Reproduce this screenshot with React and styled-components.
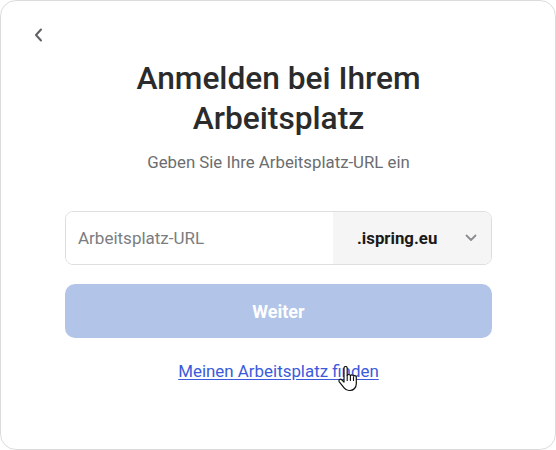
import React from 'react'
import styled, { createGlobalStyle } from 'styled-components'

const GlobalStyle = createGlobalStyle`
  html, body {
    margin: 0;
    padding: 0;
    background: #fff;
  }
  body {
    font-family: Roboto, "Noto Sans", Arial, sans-serif;
    -webkit-font-smoothing: antialiased;
  }
`

const Card = styled.div`
  box-sizing: border-box;
  width: 556px;
  height: 450px;
  border: 1px solid #dcdcdc;
  border-radius: 16px;
  background: #fff;
  padding: 22px 63px 0 64px;
  display: flex;
  flex-direction: column;
  position: relative;
`

const BackButton = styled.button`
  align-self: flex-start;
  width: 24px;
  height: 24px;
  margin-left: -38px;
  padding: 0;
  border: 0;
  background: none;
  color: #5f6166;
  display: flex;
  align-items: center;
  justify-content: center;
  cursor: pointer;
`

const Title = styled.h1`
  margin: 12px 0 0;
  font-size: 31.7px;
  line-height: 40px;
  font-weight: 500;
  color: #2b2b2b;
  text-align: center;
`

const Subtitle = styled.p`
  margin: 12px 0 0;
  font-size: 16.8px;
  line-height: 22px;
  color: #6b6d70;
  text-align: center;
`

const Field = styled.div`
  margin-top: 38px;
  height: 54px;
  box-sizing: border-box;
  border: 1px solid #dedede;
  border-radius: 8px;
  display: flex;
  overflow: hidden;
`

const UrlInput = styled.input`
  flex: 1;
  min-width: 0;
  border: 0;
  outline: none;
  padding: 0 12px;
  font-family: inherit;
  font-size: 17px;
  color: #2b2b2b;
  &::placeholder {
    color: #7b7d80;
  }
`

const Domain = styled.div`
  width: 158px;
  background: #f5f5f5;
  display: flex;
  align-items: center;
  justify-content: space-between;
  padding: 0 14px 0 24px;
  box-sizing: border-box;
  font-size: 16.8px;
  font-weight: 700;
  color: #1a1a1a;
`

const SubmitButton = styled.button`
  margin-top: 19px;
  height: 54px;
  border: 0;
  border-radius: 10px;
  background: #b2c4e8;
  color: #fff;
  font-family: inherit;
  font-size: 18px;
  font-weight: 700;
`

const FindLink = styled.a`
  align-self: center;
  margin-top: 23px;
  font-size: 16.9px;
  line-height: 20px;
  color: #3b5bdb;
  text-decoration: underline;
  text-underline-offset: 2px;
  position: relative;
`

const Pointer = styled.svg`
  position: absolute;
  left: 160px;
  top: 5px;
`

export default function App() {
  return (
    <>
      <GlobalStyle />
      <Card>
        <BackButton aria-label="Zurück">
          <svg width="12" height="16" viewBox="0 0 12 16" fill="none">
            <path d="M8 2.5 L3 8 L8 13.5" stroke="currentColor" strokeWidth="2" strokeLinecap="round" strokeLinejoin="round" />
          </svg>
        </BackButton>
        <Title>
          Anmelden bei Ihrem
          <br />
          Arbeitsplatz
        </Title>
        <Subtitle>Geben Sie Ihre Arbeitsplatz-URL ein</Subtitle>
        <Field>
          <UrlInput placeholder="Arbeitsplatz-URL" />
          <Domain>
            .ispring.eu
            <svg width="12" height="8" viewBox="0 0 12 8" fill="none">
              <path d="M1.5 1.5 L6 6 L10.5 1.5" stroke="#8a8c90" strokeWidth="1.8" strokeLinecap="round" strokeLinejoin="round" />
            </svg>
          </Domain>
        </Field>
        <SubmitButton>Weiter</SubmitButton>
        <FindLink href="#">
          Meinen Arbeitsplatz finden
          <Pointer width="20" height="26" viewBox="0 0 20 26">
            <path
              d="M6 2.2c0-1 .7-1.7 1.6-1.7s1.6.7 1.6 1.7v7.3c.3-.6.9-1 1.6-1 .8 0 1.4.5 1.6 1.2.3-.5.9-.9 1.5-.9.8 0 1.4.6 1.6 1.3.3-.3.7-.5 1.2-.5.9 0 1.6.8 1.6 1.7v6.4c0 3.8-2.7 6.8-6.3 6.8H11c-2.2 0-3.6-.9-4.9-2.6L1.3 15.8c-.5-.7-.4-1.7.3-2.2.7-.5 1.6-.4 2.2.2L6 16.1V2.2z"
              fill="#fff"
              stroke="#111"
              strokeWidth="1.2"
              strokeLinejoin="round"
            />
            <path d="M9.2 9.5v5M12.4 10.3v4.2M15.5 11v3.5" stroke="#111" strokeWidth="1.1" strokeLinecap="round" />
          </Pointer>
        </FindLink>
      </Card>
    </>
  )
}
